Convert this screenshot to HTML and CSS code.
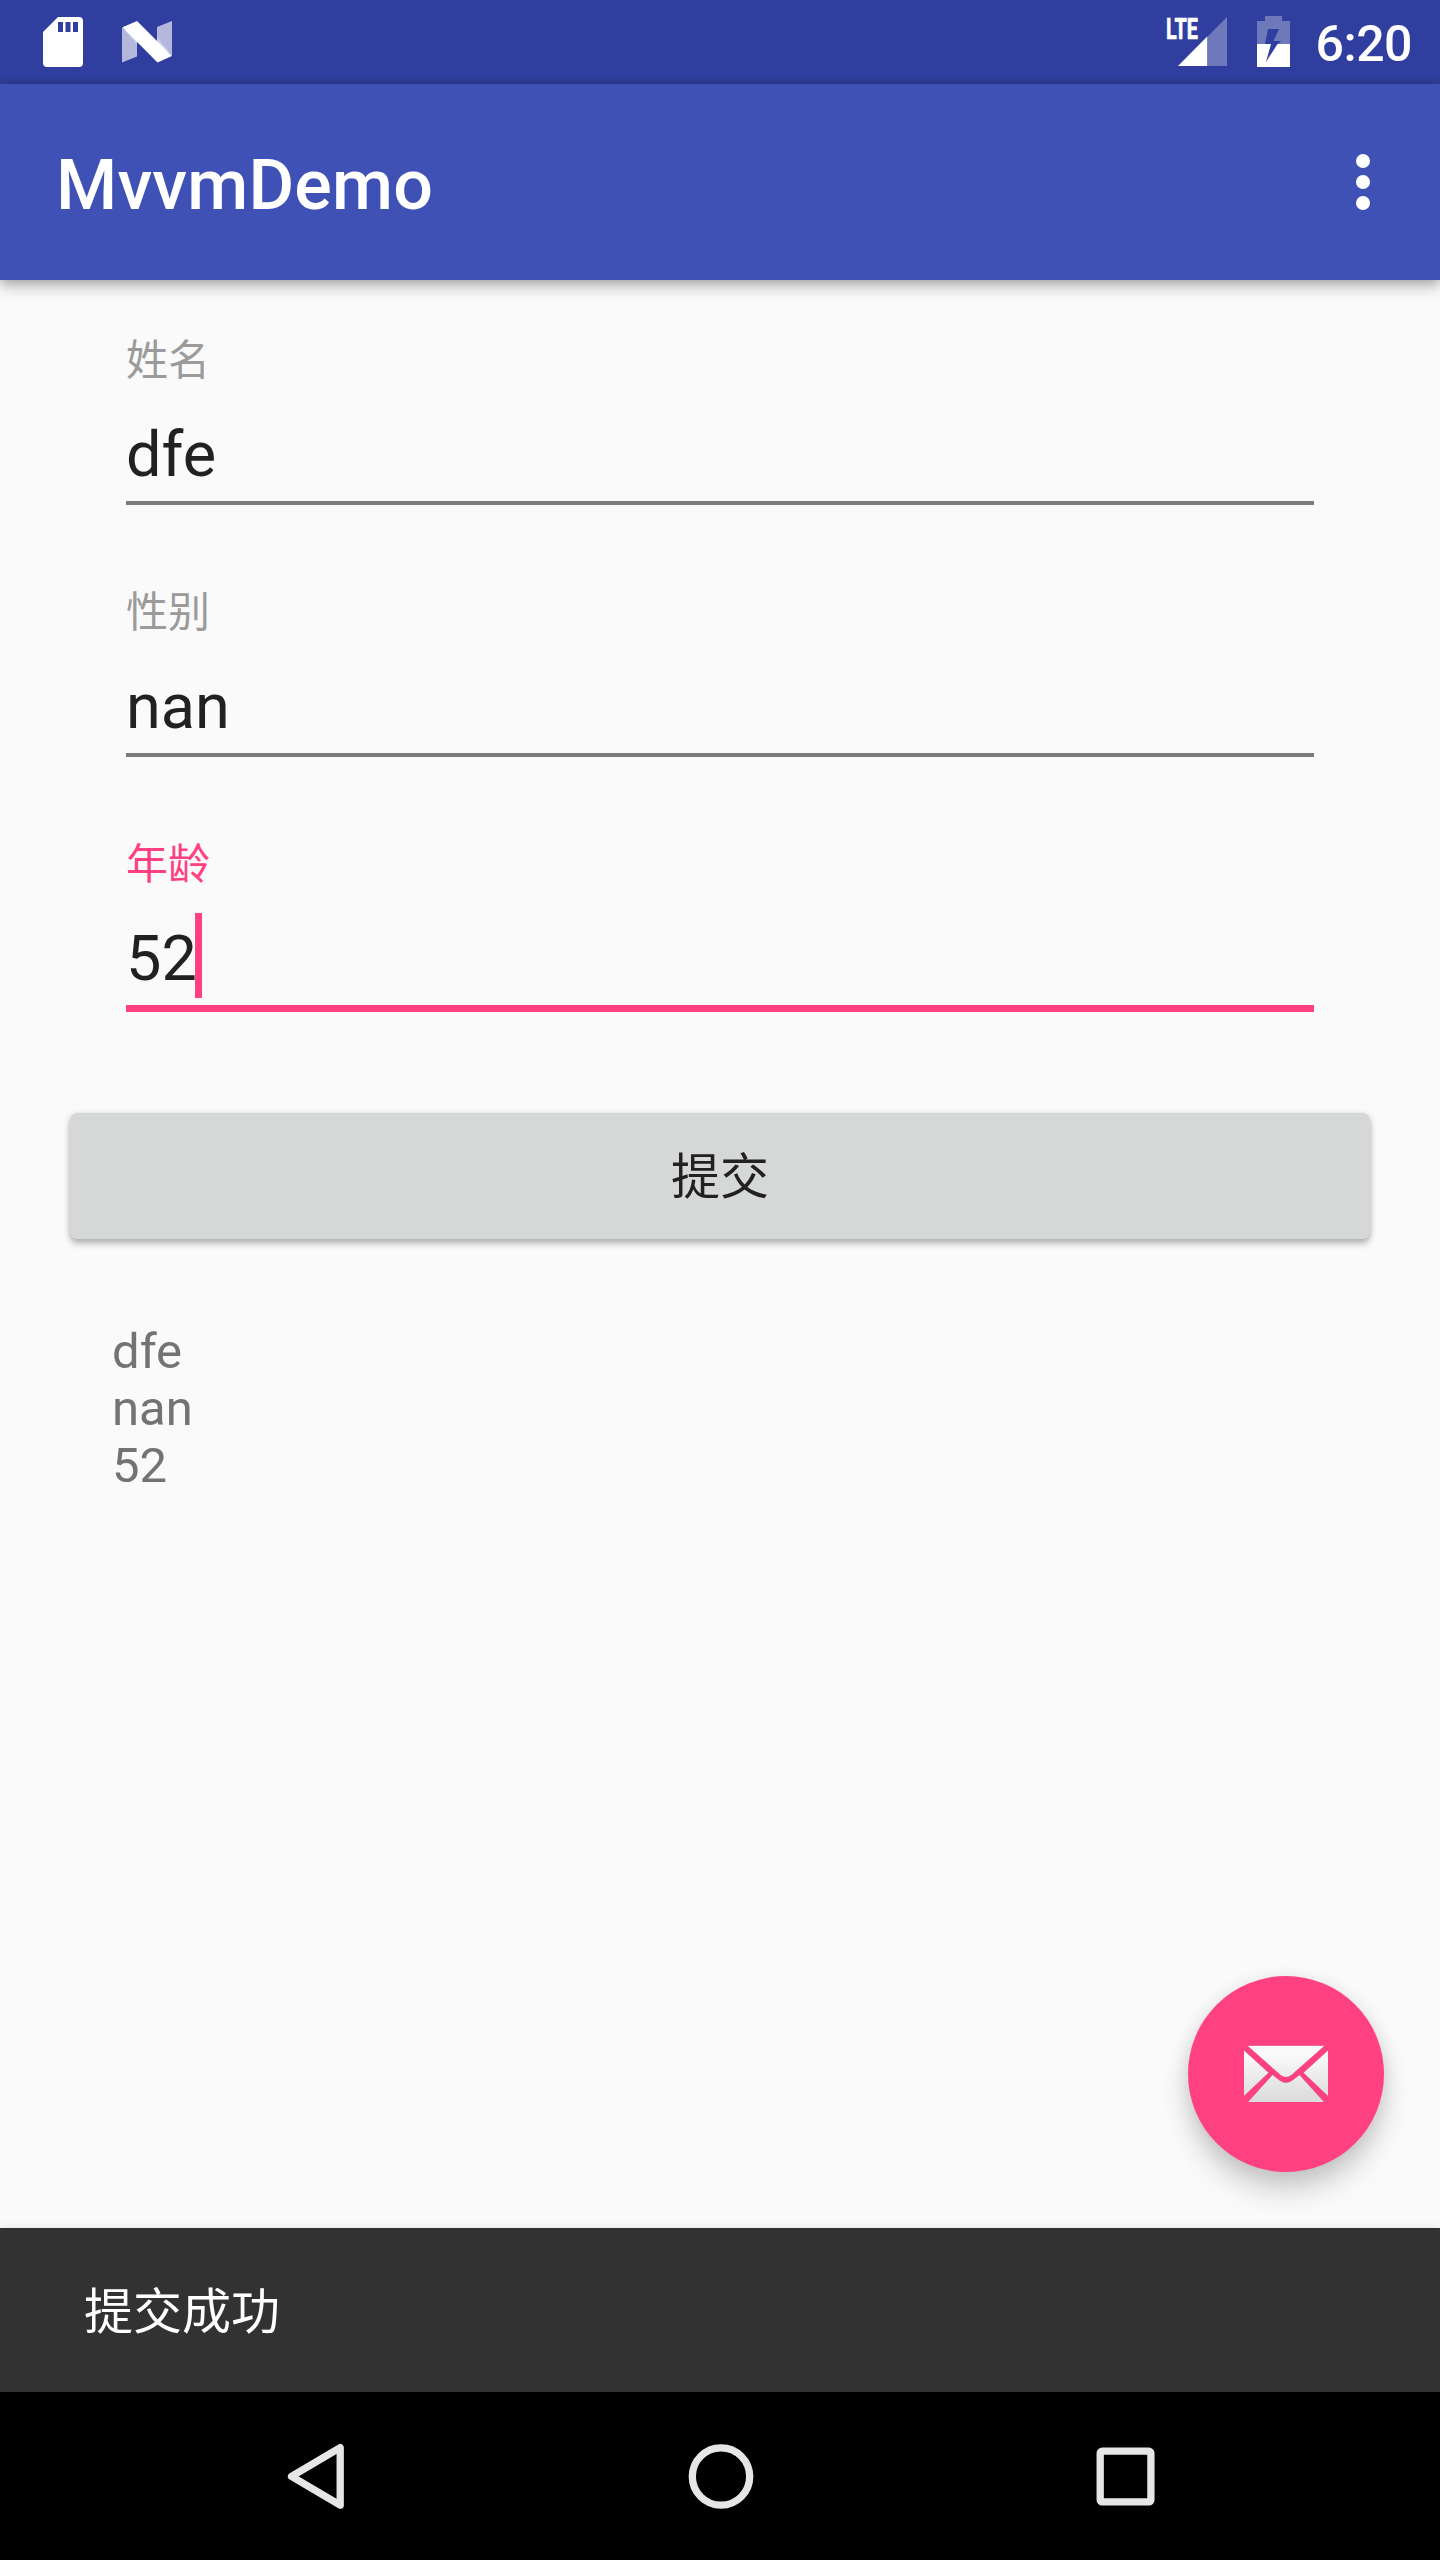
FILE: index.html
```html
<!DOCTYPE html>
<html lang="zh-CN">
<head>
<meta charset="utf-8">
<title>MvvmDemo</title>
<link rel="stylesheet" href="styles.css">
</head>
<body>
<div class="screen">
  <header class="status-bar">
    <svg class="status-sd" width="40" height="50" viewBox="0 0 40 50"><path fill="#fff" fill-rule="evenodd" d="M15 0H36a4 4 0 0 1 4 4V46a4 4 0 0 1-4 4H4a4 4 0 0 1-4-4V15ZM15 5V15H20V5ZM22.500 5V15H27.500V5ZM30 5V15H35V5Z"/></svg>
    <svg class="status-n" width="50" height="42" viewBox="0 0 50 42"><path fill="#b3b7dc" d="M0 6 15 21V35.500L0 41.500ZM35 6 50 0V35L35 20Z"/><path fill="#c9cce8" d="M1 7 15 17V24ZM35 16 49 33 35 23Z"/><path fill="#fff" d="M.5 6.300 15 0 50 35 35.500 41.500Z"/></svg>
    <svg class="status-signal" width="62" height="50" viewBox="0 0 62 50"><path fill="#fff" fill-opacity=".3" d="M41.200 20 61 0V49H41.200Z"/><path fill="#fff" d="M12 49 41.200 19.500V49Z"/><text class="lte" x="0" y="22" textLength="32" lengthAdjust="spacingAndGlyphs">LTE</text></svg>
    <svg class="status-battery" width="33" height="51" viewBox="0 0 33 51"><path fill="#fff" fill-opacity=".3" fill-rule="evenodd" d="M8 0H25V5H33V28H20.500L24.500 25H16.500L22 13H11L8 28H0V5H8Z"/><path fill="#fff" d="M0 28H14L9 46 20.500 28H33V51H0Z"/></svg>
    <span class="clock">6:20</span>
  </header>
  <div class="app-bar">
    <h1 class="app-title">MvvmDemo</h1>
    <svg class="overflow" width="14" height="56" viewBox="0 0 14 56"><circle cx="7" cy="7" r="7"/><circle cx="7" cy="28" r="7"/><circle cx="7" cy="49" r="7"/></svg>
  </div>
  <main class="content">
    <div class="field"><div class="field-label">姓名</div><div class="field-value">dfe</div></div>
    <div class="field"><div class="field-label">性别</div><div class="field-value">nan</div></div>
    <div class="field field-active"><div class="field-label">年龄</div><div class="field-value">52<span class="caret"></span></div></div>
    <button class="submit">提交</button>
    <div class="result"><div>dfe</div><div>nan</div><div>52</div></div>
    <div class="fab">
      <svg width="84" height="58" viewBox="0 0 84 58">
        <defs><linearGradient id="paper" x1="0" y1="0" x2="0" y2="58" gradientUnits="userSpaceOnUse"><stop offset=".15" stop-color="#fafafa"/><stop offset="1" stop-color="#dadada"/></linearGradient></defs>
        <g class="envelope" fill="url(#paper)"><path d="M3.500 .8H80.500L48 29.500Q42 34.500 36 29.500Z"/><path d="M0 5.500 24.500 27.700 0 51Z"/><path d="M84 5.500 59.500 27.700 84 51Z"/><path d="M28.500 30 36 35.800Q42 39.500 48 35.800L55.500 30 80 57H4Z"/></g>
      </svg>
    </div>
  </main>
  <div class="snackbar">提交成功</div>
  <nav class="nav-bar">
    <svg width="66" height="70" viewBox="0 0 66 70"><path d="M57.200 6.600V64.200L8.500 35.300Z"/></svg>
    <svg width="66" height="70" viewBox="0 0 66 70"><circle cx="33" cy="35.500" r="28.700"/></svg>
    <svg width="66" height="70" viewBox="0 0 66 70"><rect x="8.200" y="10.200" width="50.700" height="50.700" rx="2"/></svg>
  </nav>
</div>
</body>
</html>
```
FILE: styles.css
```css
* { box-sizing: border-box; }

body {
  margin: 0;
  background: #fafafa;
  font-family: Roboto, "Noto Sans CJK SC", sans-serif;
}

.screen {
  width: 1440px;
  height: 2560px;
  display: flex;
  flex-direction: column;
  overflow: hidden;
}

.status-bar {
  height: 84px;
  display: flex;
  align-items: flex-start;
  padding: 16px 28px 0 43px;
  background: #303f9f;
  color: #fff;
}

.status-bar svg {
  flex: none;
  overflow: visible;
}

.status-sd { margin-top: 1px; }
.status-n { margin: 5px auto 0 39px; }
.status-signal { margin-top: 1px; margin-right: 29px; }
.status-battery { margin-right: 26px; }

.lte {
  font: 700 29px Roboto, sans-serif;
  fill: #fff;
  stroke: #fff;
  stroke-width: .6px;
}

.clock {
  margin-top: -1px;
  font-size: 50px;
  font-weight: 500;
  line-height: 58px;
  letter-spacing: -.5px;
}

.app-bar {
  position: relative;
  z-index: 1;
  height: 196px;
  display: flex;
  align-items: center;
  justify-content: space-between;
  padding: 0 70px 0 56px;
  background: #3f51b5;
  color: #fff;
  box-shadow: 0 7px 14px rgba(0, 0, 0, .24), 0 0 10px rgba(0, 0, 0, .2);
}

.app-title {
  margin: 0;
  padding-top: 6px;
  font-size: 70px;
  font-weight: 500;
  line-height: 82px;
  letter-spacing: .2px;
}

.overflow { fill: #fff; }

.content {
  position: relative;
  flex: 1;
  padding: 45px 70px 0;
}

.field {
  height: 252px;
  margin: 0 56px;
  padding-top: 11px;
}

.field-label {
  font-size: 42px;
  line-height: 50px;
  color: #9b9b9b;
}

.field-value {
  display: flex;
  height: 119px;
  padding-top: 32px;
  font-size: 63px;
  line-height: 74px;
  color: #212121;
  border-bottom: 4px solid #7c7c7c;
}

.field-active .field-label { color: #ff4081; }

.field-active .field-value {
  height: 122px;
  border-bottom: 7px solid #ff4081;
}

.caret {
  width: 7px;
  height: 85px;
  margin: -9px 0 0 -2px;
  background: #ff4081;
}

.submit {
  display: block;
  width: 100%;
  height: 126px;
  margin: 32px 0 0;
  padding: 4px 0 0;
  border: 0;
  border-radius: 7px;
  background: #d6d7d7;
  color: #212121;
  font: 400 49px/58px Roboto, "Noto Sans CJK SC", sans-serif;
  box-shadow: 0 5px 6px rgba(0, 0, 0, .22), 0 1px 6px rgba(0, 0, 0, .15);
}

.result {
  padding: 84px 42px 0;
  font-size: 49px;
  line-height: 57px;
  color: #737373;
}

.fab {
  position: absolute;
  right: 56px;
  bottom: 56px;
  width: 196px;
  height: 196px;
  display: flex;
  align-items: center;
  justify-content: center;
  border-radius: 50%;
  background: #ff4081;
  box-shadow: 0 18px 28px rgba(0, 0, 0, .19), 0 2px 18px rgba(0, 0, 0, .08);
}

.envelope { filter: drop-shadow(0 .5px .5px rgba(0, 0, 0, .4)); }

.snackbar {
  position: relative;
  height: 164px;
  padding: 56px 84px 50px;
  background: #323232;
  color: #fff;
  font-size: 49px;
  line-height: 58px;
  box-shadow: 0 0 8px rgba(0, 0, 0, .1);
}

.nav-bar {
  position: relative;
  height: 168px;
  display: flex;
  align-items: center;
  justify-content: space-between;
  padding: 0 282px 0 283px;
  background: #000;
}

.nav-bar svg {
  fill: none;
  stroke: #e6e6e6;
  stroke-width: 7.3px;
  stroke-linejoin: round;
}
```
